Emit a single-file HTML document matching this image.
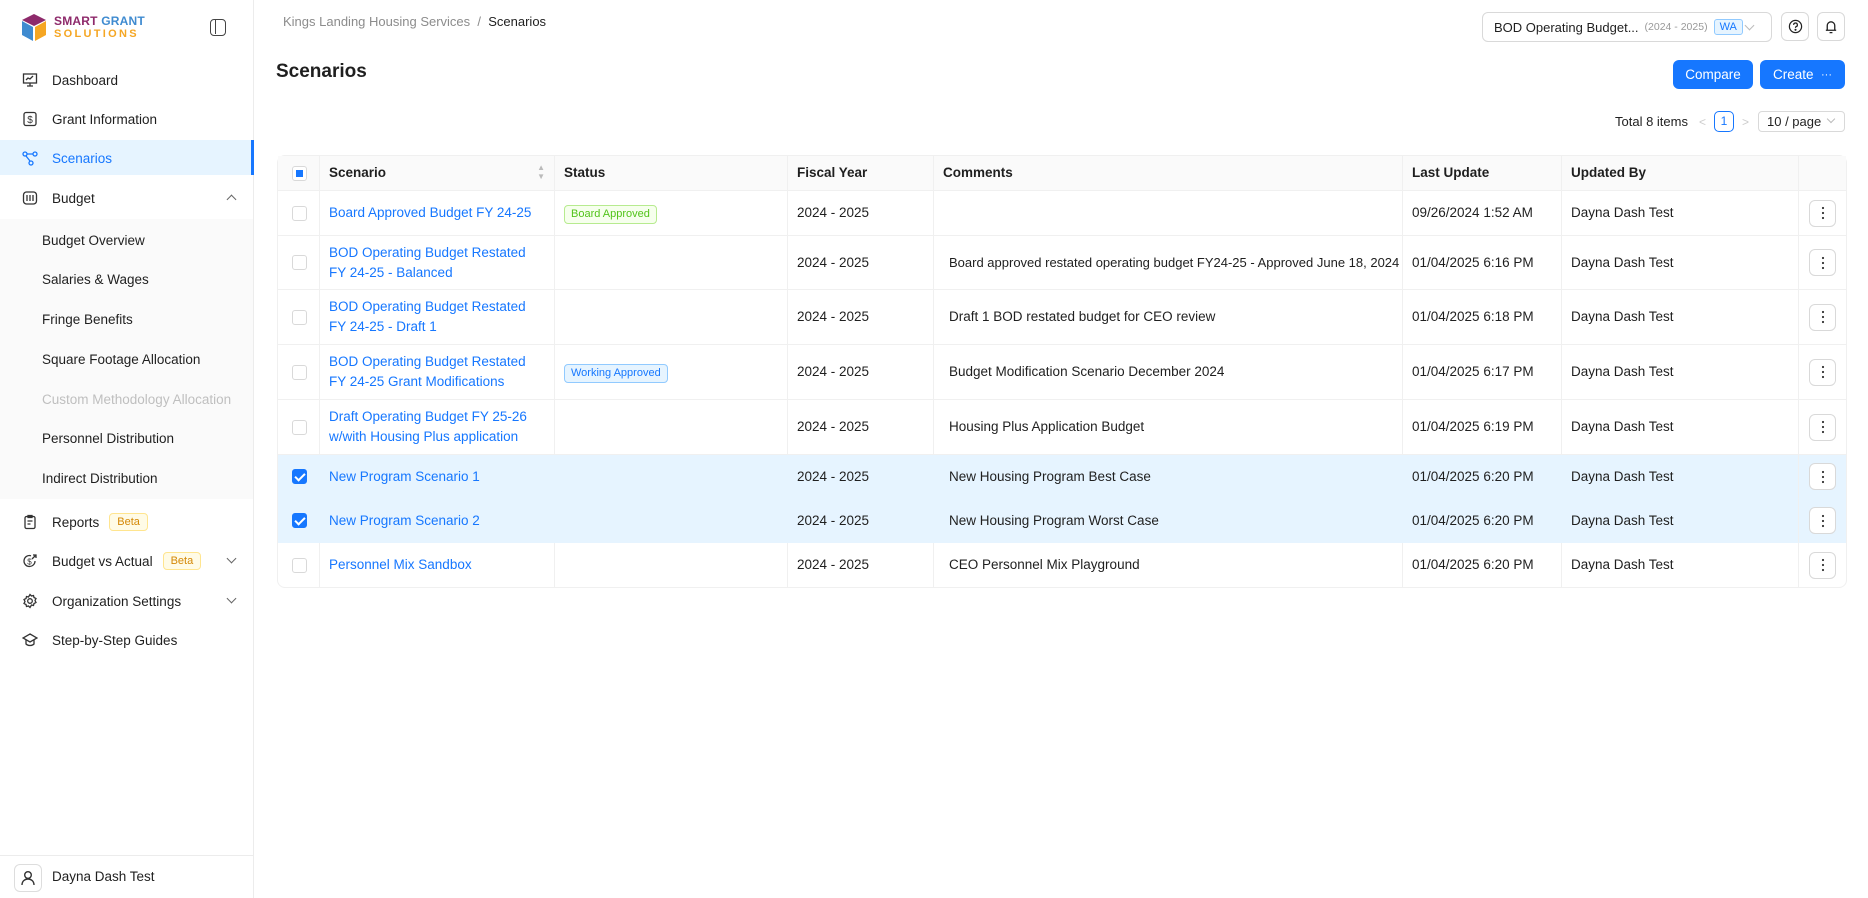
<!DOCTYPE html>
<html><head><meta charset="utf-8"><style>
*{box-sizing:border-box;margin:0;padding:0}
body{width:1868px;height:898px;overflow:hidden;font-family:"Liberation Sans",sans-serif;font-size:13.5px;color:#1f1f1f;background:#fff;position:relative}
.sb{position:absolute;left:0;top:0;width:254px;height:898px;border-right:1px solid #ececec;background:#fff}
.it{position:absolute;left:0;width:253px;height:38px;display:flex;align-items:center;padding-left:22px;font-size:13.5px;color:#1f1f1f}
.it svg{width:16px;height:16px;margin-right:14px;flex:none}
.sub{position:absolute;left:0;top:219px;width:253px;height:280px;background:#fafafa}
.si{position:absolute;left:42px;font-size:13.5px;color:#1f1f1f}
.beta{display:inline-block;margin-left:10px;border:1px solid #ffe58f;background:#fffbe6;color:#d48806;font-size:11px;padding:2px 7px;border-radius:4px}
.chev{position:absolute;right:18px;width:7px;height:7px;border-right:1.5px solid #666;border-bottom:1.5px solid #666}
table{position:absolute;left:277px;top:155px;border-collapse:separate;border-spacing:0;table-layout:fixed;width:1568px;border:1px solid #f0f0f0;border-radius:8px}
td,th{border-bottom:1px solid #f0f0f0;border-right:1px solid #f0f0f0;padding:0 9px;text-align:left;vertical-align:middle;font-size:13.5px;line-height:20px}
th{background:#fafafa;font-weight:bold;height:35px;color:#1f1f1f}
td:last-child,th:last-child{border-right:none}
tr.sel td{background:#e6f4ff;border-right-color:#e6f4ff;border-bottom-color:#e6f4ff}
tr.sel td:nth-child(7){border-right-color:#f0f0f0}
a{color:#1677ff;text-decoration:none}
.cb{width:15px;height:15px;border:1px solid #d9d9d9;border-radius:3px;margin-left:5px;background:#fff;position:relative}
.cb.on{background:#1677ff;border-color:#1677ff}
.cb.on:after{content:"";position:absolute;left:4px;top:1px;width:4px;height:8px;border:solid #fff;border-width:0 2px 2px 0;transform:rotate(45deg)}
.cb.ind:after{content:"";position:absolute;left:3px;top:3px;width:7px;height:7px;background:#1677ff}
.tag{display:inline-block;font-size:11px;padding:0 6px;line-height:17px;border-radius:4px}
.g{color:#52c41a;background:#f6ffed;border:1px solid #b7eb8f}
.b{color:#1677ff;background:#e6f4ff;border:1px solid #91caff}
.act{width:27px;height:27px;border:1px solid #d9d9d9;border-radius:6px;background:#fff;margin:0 auto;display:flex;align-items:center;justify-content:center}
.btn{position:absolute;top:60px;height:29px;background:#1677ff;color:#fff;border-radius:6px;display:flex;align-items:center;justify-content:center;font-size:13.5px}
</style></head><body>
<svg width="0" height="0" style="position:absolute"><symbol id="dots" viewBox="0 0 4 14"><circle cx="2" cy="2" r="1.1" fill="#333"/><circle cx="2" cy="7" r="1.1" fill="#333"/><circle cx="2" cy="12" r="1.1" fill="#333"/></symbol></svg>
<div class="sb">
  <div style="position:absolute;left:21px;top:13px;width:26px;height:30px">
    <svg width="26" height="30" viewBox="0 0 26 30"><path d="M13 1 25 7 13 13 1 7Z" fill="#8e2a6b"/><path d="M1 8 12 14 12 28 1 22Z" fill="#3f8bd0"/><path d="M14 14 25 8 25 22 14 28Z" fill="#f5a623"/></svg>
  </div>
  <div style="position:absolute;left:54px;top:15px;font-size:12px;font-weight:bold;color:#8e2a6b;line-height:13px;letter-spacing:.2px">SMART <span style="color:#3f8bd0">GRANT</span></div>
  <div style="position:absolute;left:54px;top:28px;font-size:11px;font-weight:bold;color:#f5a623;letter-spacing:2.3px;line-height:12px">SOLUTIONS</div>
  <div style="position:absolute;left:210px;top:19px;width:16px;height:17px;border:1.5px solid #444;border-radius:4px"><div style="position:absolute;left:4px;top:0;width:1px;height:14px;background:#444"></div></div>
  <div class="it" style="top:61px"><svg viewBox="0 0 16 16" fill="none" stroke="#333" stroke-width="1.3"><rect x="1.5" y="2" width="13" height="9"/><path d="M4 8l2-2 2 1 3-3M8 11v3M5 14h6"/></svg>Dashboard</div>
  <div class="it" style="top:100px"><svg viewBox="0 0 16 16" fill="none" stroke="#333" stroke-width="1.3"><rect x="2" y="1.5" width="12" height="13" rx="2"/><text x="8" y="12" font-size="10" text-anchor="middle" fill="#333" stroke="none">$</text></svg>Grant Information</div>
  <div style="position:absolute;left:0;top:140px;width:254px;height:35px;background:#e6f4ff;border-right:3px solid #1677ff"></div>
  <div class="it" style="top:139px;color:#1677ff"><svg viewBox="0 0 16 16" fill="none" stroke="#1677ff" stroke-width="1.3"><circle cx="3" cy="4" r="2"/><circle cx="13" cy="4" r="2"/><circle cx="9" cy="13" r="2"/><path d="M5 4h6M4 6l4 5"/></svg>Scenarios</div>
  <div class="it" style="top:179px"><svg viewBox="0 0 16 16" fill="none" stroke="#333" stroke-width="1.3"><rect x="1.5" y="2" width="13" height="12" rx="3"/><path d="M5 5v6M8 5v6M11 5v6"/></svg>Budget<span class="chev" style="transform:rotate(-135deg);top:17px"></span></div>
  <div class="sub"></div>
  <div class="si" style="top:233px">Budget Overview</div>
  <div class="si" style="top:272px">Salaries &amp; Wages</div>
  <div class="si" style="top:312px">Fringe Benefits</div>
  <div class="si" style="top:352px">Square Footage Allocation</div>
  <div class="si" style="top:392px;color:#bfbfbf">Custom Methodology Allocation</div>
  <div class="si" style="top:431px">Personnel Distribution</div>
  <div class="si" style="top:471px">Indirect Distribution</div>
  <div class="it" style="top:503px"><svg viewBox="0 0 16 16" fill="none" stroke="#333" stroke-width="1.3"><rect x="3" y="2.5" width="10" height="12" rx="1.5"/><path d="M6 1.5h4v2H6zM5.5 7h5M5.5 10h3"/></svg>Reports<span class="beta">Beta</span></div>
  <div class="it" style="top:542px"><svg viewBox="0 0 16 16" fill="none" stroke="#333" stroke-width="1.3"><path d="M13 8A5.5 5.5 0 1 1 9 2.7"/><path d="M11 2h3v3M14 2l-4 4"/><text x="7.5" y="11.5" font-size="8" text-anchor="middle" fill="#333" stroke="none">$</text></svg>Budget vs Actual<span class="beta">Beta</span><span class="chev" style="transform:rotate(45deg);top:13px"></span></div>
  <div class="it" style="top:582px"><svg viewBox="0 0 16 16" fill="none" stroke="#333" stroke-width="1.3"><circle cx="8" cy="8" r="2.3"/><path d="M8 1.5l1.5 1.5 2-.5.5 2 2 1-1 2 1 2-2 1-.5 2-2-.5L8 14.5 6.5 13l-2 .5-.5-2-2-1 1-2-1-2 2-1 .5-2 2 .5z"/></svg>Organization Settings<span class="chev" style="transform:rotate(45deg);top:13px"></span></div>
  <div class="it" style="top:621px"><svg viewBox="0 0 16 16" fill="none" stroke="#333" stroke-width="1.3"><path d="M8 2 15 6 8 10 1 6Z"/><path d="M4 8v4c2 2 6 2 8 0V8"/></svg>Step-by-Step Guides</div>
  <div style="position:absolute;left:0;top:855px;width:253px;border-top:1px solid #ececec"></div>
  <div style="position:absolute;left:14px;top:864px;width:28px;height:28px;border:1px solid #ddd;border-radius:6px;display:flex;align-items:center;justify-content:center"><svg width="14" height="16" viewBox="0 0 14 16" fill="none" stroke="#333" stroke-width="1.4"><circle cx="7" cy="5" r="3.3"/><path d="M1 15c0-4 3-6 6-6s6 2 6 6"/></svg></div>
  <div style="position:absolute;left:52px;top:869px;font-size:13.5px">Dayna Dash Test</div>
</div>

<div style="position:absolute;left:283px;top:14px;font-size:13px;color:#8c8c8c">Kings Landing Housing Services &nbsp;/&nbsp; <span style="color:#1f1f1f">Scenarios</span></div>
<div style="position:absolute;left:276px;top:61px;font-size:19px;font-weight:bold">Scenarios</div>

<div style="position:absolute;left:1482px;top:12px;width:290px;height:30px;border:1px solid #d9d9d9;border-radius:6px;display:flex;align-items:center;padding-left:11px;font-size:13px">BOD Operating Budget...<span style="color:#999;font-size:10.5px;margin-left:6px">(2024 - 2025)</span><span style="margin-left:6px;background:#e6f4ff;border:1px solid #91caff;color:#1677ff;font-size:11px;padding:1px 5px;border-radius:3px">WA</span><span style="position:absolute;right:18px;top:9px;width:7px;height:7px;border-right:1px solid #bbb;border-bottom:1px solid #bbb;transform:rotate(45deg)"></span></div>
<div style="position:absolute;left:1781px;top:12px;width:28px;height:29px;border:1px solid #d9d9d9;border-radius:6px;display:flex;align-items:center;justify-content:center"><svg width="15" height="15" viewBox="0 0 16 16" fill="none" stroke="#222" stroke-width="1.3"><circle cx="8" cy="8" r="6.5"/><path d="M6 6.3a2 2 0 1 1 2.5 1.9c-.4.2-.5.5-.5 1.2"/><circle cx="8" cy="11.5" r=".5" fill="#222"/></svg></div>
<div style="position:absolute;left:1817px;top:12px;width:28px;height:29px;border:1px solid #d9d9d9;border-radius:6px;display:flex;align-items:center;justify-content:center"><svg width="14" height="15" viewBox="0 0 14 16" fill="none" stroke="#222" stroke-width="1.4"><path d="M3 12V7a4 4 0 0 1 8 0v5h1.5H1.5ZM5.5 14.5h3"/></svg></div>

<div class="btn" style="left:1673px;width:80px">Compare</div>
<div class="btn" style="left:1760px;width:85px">Create &nbsp;<span style="font-size:11px">···</span></div>

<div style="position:absolute;left:1615px;top:114px;font-size:13px">Total 8 items</div>
<div style="position:absolute;left:1699px;top:115px;color:#ccc;font-size:12px">&lt;</div>
<div style="position:absolute;left:1714px;top:111px;width:20px;height:21px;border:1px solid #1677ff;border-radius:5px;color:#1677ff;font-size:12px;text-align:center;line-height:19px">1</div>
<div style="position:absolute;left:1742px;top:115px;color:#ccc;font-size:12px">&gt;</div>
<div style="position:absolute;left:1758px;top:111px;width:87px;height:21px;border:1px solid #d9d9d9;border-radius:4px;font-size:13px;padding-left:8px;line-height:19px">10 / page<span style="position:absolute;right:10px;top:4px;width:6px;height:6px;border-right:1px solid #bbb;border-bottom:1px solid #bbb;transform:rotate(45deg)"></span></div>

<table>
<colgroup><col style="width:42px"><col style="width:235px"><col style="width:233px"><col style="width:146px"><col style="width:469px"><col style="width:159px"><col style="width:237px"><col style="width:47px"></colgroup>
<tr><th><div class="cb ind"></div></th><th>Scenario<span style="float:right;color:#bbb;font-size:8px;line-height:9px">▲<br>▼</span></th><th>Status</th><th>Fiscal Year</th><th>Comments</th><th>Last Update</th><th>Updated By</th><th></th></tr>
<tr style="height:45px"><td><div class="cb"></div></td><td><a>Board Approved Budget FY 24-25</a></td><td><span class="tag g">Board Approved</span></td><td>2024 - 2025</td><td></td><td>09/26/2024 1:52 AM</td><td>Dayna Dash Test</td><td><div class="act"><svg width="4" height="14"><use href="#dots"/></svg></div></td></tr>
<tr style="height:54px"><td><div class="cb"></div></td><td><a>BOD Operating Budget Restated FY 24-25 - Balanced</a></td><td></td><td>2024 - 2025</td><td style="padding-left:15px;white-space:nowrap;font-size:13px">Board approved restated operating budget FY24-25 - Approved June 18, 2024</td><td>01/04/2025 6:16 PM</td><td>Dayna Dash Test</td><td><div class="act"><svg width="4" height="14"><use href="#dots"/></svg></div></td></tr>
<tr style="height:55px"><td><div class="cb"></div></td><td><a>BOD Operating Budget Restated FY 24-25 - Draft 1</a></td><td></td><td>2024 - 2025</td><td style="padding-left:15px">Draft 1 BOD restated budget for CEO review</td><td>01/04/2025 6:18 PM</td><td>Dayna Dash Test</td><td><div class="act"><svg width="4" height="14"><use href="#dots"/></svg></div></td></tr>
<tr style="height:55px"><td><div class="cb"></div></td><td><a>BOD Operating Budget Restated FY 24-25 Grant Modifications</a></td><td><span class="tag b">Working Approved</span></td><td>2024 - 2025</td><td style="padding-left:15px">Budget Modification Scenario December 2024</td><td>01/04/2025 6:17 PM</td><td>Dayna Dash Test</td><td><div class="act"><svg width="4" height="14"><use href="#dots"/></svg></div></td></tr>
<tr style="height:55px"><td><div class="cb"></div></td><td><a>Draft Operating Budget FY 25-26 w/with Housing Plus application</a></td><td></td><td>2024 - 2025</td><td style="padding-left:15px">Housing Plus Application Budget</td><td>01/04/2025 6:19 PM</td><td>Dayna Dash Test</td><td><div class="act"><svg width="4" height="14"><use href="#dots"/></svg></div></td></tr>
<tr class="sel" style="height:44px"><td><div class="cb on"></div></td><td><a>New Program Scenario 1</a></td><td></td><td>2024 - 2025</td><td style="padding-left:15px">New Housing Program Best Case</td><td>01/04/2025 6:20 PM</td><td>Dayna Dash Test</td><td><div class="act"><svg width="4" height="14"><use href="#dots"/></svg></div></td></tr>
<tr class="sel" style="height:44px"><td><div class="cb on"></div></td><td><a>New Program Scenario 2</a></td><td></td><td>2024 - 2025</td><td style="padding-left:15px">New Housing Program Worst Case</td><td>01/04/2025 6:20 PM</td><td>Dayna Dash Test</td><td><div class="act"><svg width="4" height="14"><use href="#dots"/></svg></div></td></tr>
<tr style="height:44px"><td style="border-bottom:none"><div class="cb"></div></td><td style="border-bottom:none"><a>Personnel Mix Sandbox</a></td><td style="border-bottom:none"></td><td style="border-bottom:none">2024 - 2025</td><td style="padding-left:15px;border-bottom:none">CEO Personnel Mix Playground</td><td style="border-bottom:none">01/04/2025 6:20 PM</td><td style="border-bottom:none">Dayna Dash Test</td><td style="border-bottom:none"><div class="act"><svg width="4" height="14"><use href="#dots"/></svg></div></td></tr>
</table>
</body></html>
